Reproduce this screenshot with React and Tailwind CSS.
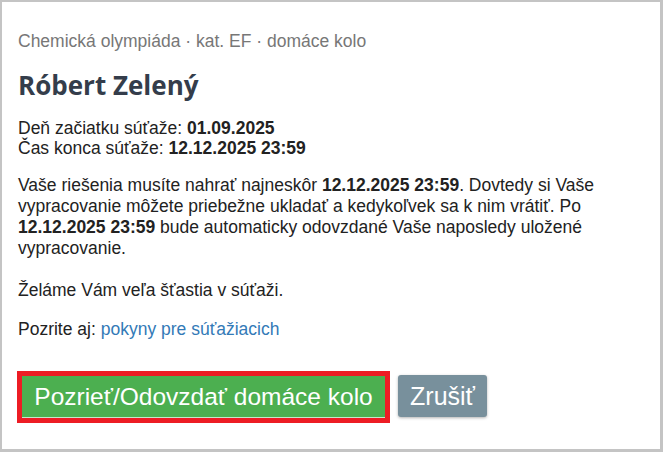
export default function App() {
  return (
    <div className="w-[663px] h-[452px] bg-white border-t-2 border-l-2 border-r-[3px] border-b-[3px] border-[#c4c4c4] pl-4 pr-4 pt-[28px] box-border" style={{ fontFamily: '"Liberation Sans", Arial, sans-serif' }}>
      <div className="text-[17.5px] leading-[22px] text-[#777777]">Chemická olympiáda · kat. EF · domáce kolo</div>
      <h1 className="mt-[17px] text-[26px] leading-[32px] font-bold text-[#343d4b]" style={{ fontFamily: '"Open Sans", sans-serif' }}>Róbert Zelený</h1>
      <div className="mt-[17px] text-[17.5px] leading-[20px] text-[#222222]">
        <div>Deň začiatku súťaže: <b>01.09.2025</b></div>
        <div>Čas konca súťaže: <b>12.12.2025 23:59</b></div>
      </div>
      <p className="mt-[17px] text-[17.5px] leading-[21px] text-[#222222] pr-[40px]">
        Vaše riešenia musíte nahrať najneskôr <b>12.12.2025 23:59</b>. Dovtedy si Vaše vypracovanie môžete priebežne ukladať a kedykoľvek sa k nim vrátiť. Po <b>12.12.2025 23:59</b> bude automaticky odovzdané Vaše naposledy uložené vypracovanie.
      </p>
      <p className="mt-[21px] text-[17.5px] leading-[21px] text-[#222222]">Želáme Vám veľa šťastia v súťaži.</p>
      <p className="mt-[18px] text-[17.5px] leading-[21px] text-[#222222]">
        Pozrite aj: <a className="text-[#337ab7]">pokyny pre súťažiacich</a>
      </p>
      <div className="mt-[31px] flex items-start gap-[8px] -ml-[1px]">
        <div className="border-[5px] border-[#ed1c24]">
          <button className="block h-[42px] w-[363px] bg-[#4caf50] text-white text-[24.5px] leading-[41px] border-b border-[#c8e6c9]">Pozrieť/Odovzdať domáce kolo</button>
        </div>
        <button className="mt-[4px] h-[42px] w-[89px] bg-[#78909c] text-white text-[25px] leading-[42px] rounded-[3px] shadow-[0_1px_3px_rgba(0,0,0,0.3)]">Zrušiť</button>
      </div>
    </div>
  );
}
